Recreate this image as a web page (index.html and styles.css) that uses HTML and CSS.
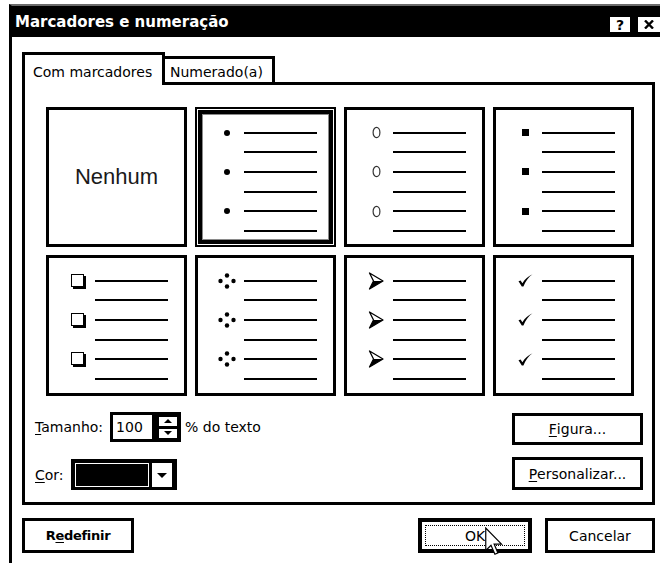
FILE: index.html
```html
<!DOCTYPE html>
<html lang="pt">
  <head>
    <meta charset="UTF-8" />
    <meta name="viewport" content="width=device-width, initial-scale=1.0" />
    <title>Marcadores e numeração</title>
    <link rel="stylesheet" href="styles.css">
  </head>
  <body>
    <div class="dialog">
      <div class="titlebar">
        <span class="title">Marcadores e numeração</span>
        <div class="title-btns">
          <span class="title-btn">?</span>
          <span class="title-btn close">
            <svg width="10" height="9" viewBox="0 0 10 9"><path d="M1 0.5 L9 8.5 M9 0.5 L1 8.5" stroke="#000" stroke-width="2.4" /></svg>
          </span>
        </div>
      </div>

      <div class="content">
        <div class="tabs">
          <div class="tab tab-active">Com marcadores</div>
          <div class="tab tab-other">Numerado(a)</div>
        </div>

        <div class="panel">
          <div class="bullets">
            <div class="cell cell-none">Nenhum</div>

            <div class="cell cell-selected">
              <div class="row"><span class="mark"><span class="dot"></span></span><span class="line"></span></div>
              <div class="row"><span class="mark"></span><span class="line"></span></div>
              <div class="row"><span class="mark"><span class="dot"></span></span><span class="line"></span></div>
              <div class="row"><span class="mark"></span><span class="line"></span></div>
              <div class="row"><span class="mark"><span class="dot"></span></span><span class="line"></span></div>
              <div class="row"><span class="mark"></span><span class="line"></span></div>
            </div>

            <div class="cell">
              <div class="row"><span class="mark"><svg width="9" height="13" viewBox="0 0 9 13"><ellipse cx="4.5" cy="6.5" rx="3.4" ry="5.2" fill="none" stroke="#333" stroke-width="1.2" /></svg></span><span class="line"></span></div>
              <div class="row"><span class="mark"></span><span class="line"></span></div>
              <div class="row"><span class="mark"><svg width="9" height="13" viewBox="0 0 9 13"><ellipse cx="4.5" cy="6.5" rx="3.4" ry="5.2" fill="none" stroke="#333" stroke-width="1.2" /></svg></span><span class="line"></span></div>
              <div class="row"><span class="mark"></span><span class="line"></span></div>
              <div class="row"><span class="mark"><svg width="9" height="13" viewBox="0 0 9 13"><ellipse cx="4.5" cy="6.5" rx="3.4" ry="5.2" fill="none" stroke="#333" stroke-width="1.2" /></svg></span><span class="line"></span></div>
              <div class="row"><span class="mark"></span><span class="line"></span></div>
            </div>

            <div class="cell">
              <div class="row"><span class="mark"><span class="sq"></span></span><span class="line"></span></div>
              <div class="row"><span class="mark"></span><span class="line"></span></div>
              <div class="row"><span class="mark"><span class="sq"></span></span><span class="line"></span></div>
              <div class="row"><span class="mark"></span><span class="line"></span></div>
              <div class="row"><span class="mark"><span class="sq"></span></span><span class="line"></span></div>
              <div class="row"><span class="mark"></span><span class="line"></span></div>
            </div>

            <div class="cell">
              <div class="row"><span class="mark"><span class="box"></span></span><span class="line"></span></div>
              <div class="row"><span class="mark"></span><span class="line"></span></div>
              <div class="row"><span class="mark"><span class="box"></span></span><span class="line"></span></div>
              <div class="row"><span class="mark"></span><span class="line"></span></div>
              <div class="row"><span class="mark"><span class="box"></span></span><span class="line"></span></div>
              <div class="row"><span class="mark"></span><span class="line"></span></div>
            </div>

            <div class="cell">
              <div class="row"><span class="mark"><svg width="18" height="16" viewBox="0 0 18 16"><circle cx="9" cy="2.5" r="2.2" /><circle cx="2.5" cy="8" r="2.2" /><circle cx="15.5" cy="8" r="2.2" /><circle cx="9" cy="13.5" r="2.2" /></svg></span><span class="line"></span></div>
              <div class="row"><span class="mark"></span><span class="line"></span></div>
              <div class="row"><span class="mark"><svg width="18" height="16" viewBox="0 0 18 16"><circle cx="9" cy="2.5" r="2.2" /><circle cx="2.5" cy="8" r="2.2" /><circle cx="15.5" cy="8" r="2.2" /><circle cx="9" cy="13.5" r="2.2" /></svg></span><span class="line"></span></div>
              <div class="row"><span class="mark"></span><span class="line"></span></div>
              <div class="row"><span class="mark"><svg width="18" height="16" viewBox="0 0 18 16"><circle cx="9" cy="2.5" r="2.2" /><circle cx="2.5" cy="8" r="2.2" /><circle cx="15.5" cy="8" r="2.2" /><circle cx="9" cy="13.5" r="2.2" /></svg></span><span class="line"></span></div>
              <div class="row"><span class="mark"></span><span class="line"></span></div>
            </div>

            <div class="cell">
              <div class="row"><span class="mark"><svg width="16" height="18" viewBox="0 0 16 18"><path d="M1.5 1 L15 9 L1.5 17 L5.5 9 Z" fill="none" stroke="#000" stroke-width="1.3" stroke-linejoin="round" /><path d="M5.5 9 L15 9 L1.5 17 Z" /></svg></span><span class="line"></span></div>
              <div class="row"><span class="mark"></span><span class="line"></span></div>
              <div class="row"><span class="mark"><svg width="16" height="18" viewBox="0 0 16 18"><path d="M1.5 1 L15 9 L1.5 17 L5.5 9 Z" fill="none" stroke="#000" stroke-width="1.3" stroke-linejoin="round" /><path d="M5.5 9 L15 9 L1.5 17 Z" /></svg></span><span class="line"></span></div>
              <div class="row"><span class="mark"></span><span class="line"></span></div>
              <div class="row"><span class="mark"><svg width="16" height="18" viewBox="0 0 16 18"><path d="M1.5 1 L15 9 L1.5 17 L5.5 9 Z" fill="none" stroke="#000" stroke-width="1.3" stroke-linejoin="round" /><path d="M5.5 9 L15 9 L1.5 17 Z" /></svg></span><span class="line"></span></div>
              <div class="row"><span class="mark"></span><span class="line"></span></div>
            </div>

            <div class="cell">
              <div class="row"><span class="mark"><svg width="15" height="13" viewBox="0 0 15 13"><path d="M0.5 7.2 L2.6 6.4 L4.4 9.2 C7 5 10 2.3 14.5 0.3 C10.5 3.2 7.6 7 5.4 12.6 L3.8 12.6 Z" /></svg></span><span class="line"></span></div>
              <div class="row"><span class="mark"></span><span class="line"></span></div>
              <div class="row"><span class="mark"><svg width="15" height="13" viewBox="0 0 15 13"><path d="M0.5 7.2 L2.6 6.4 L4.4 9.2 C7 5 10 2.3 14.5 0.3 C10.5 3.2 7.6 7 5.4 12.6 L3.8 12.6 Z" /></svg></span><span class="line"></span></div>
              <div class="row"><span class="mark"></span><span class="line"></span></div>
              <div class="row"><span class="mark"><svg width="15" height="13" viewBox="0 0 15 13"><path d="M0.5 7.2 L2.6 6.4 L4.4 9.2 C7 5 10 2.3 14.5 0.3 C10.5 3.2 7.6 7 5.4 12.6 L3.8 12.6 Z" /></svg></span><span class="line"></span></div>
              <div class="row"><span class="mark"></span><span class="line"></span></div>
            </div>
          </div>

          <div class="options">
            <div class="fields">
              <div class="field">
                <span><u>T</u>amanho:</span>
                <div class="spin">
                  <span class="spin-input">100</span>
                  <span class="spin-btns">
                    <span class="spin-btn"><span class="tri-up"></span></span>
                    <span class="spin-btn"><span class="tri-down"></span></span>
                  </span>
                </div>
                <span class="spin-unit">% do texto</span>
              </div>
              <div class="field field-color">
                <span><u>C</u>or:</span>
                <div class="combo">
                  <span class="combo-swatch"></span>
                  <span class="combo-drop"><span class="tri-down"></span></span>
                </div>
              </div>
            </div>
            <div class="side-btns">
              <button class="btn btn-side"><u>F</u>igura...</button>
              <button class="btn btn-side btn-tall"><u>P</u>ersonalizar...</button>
            </div>
          </div>
        </div>

        <div class="footer">
          <button class="btn btn-foot btn-reset">R<u>e</u>definir</button>
          <button class="btn btn-foot btn-ok"><span class="focus">OK</span></button>
          <button class="btn btn-foot btn-cancel">Cancelar</button>
        </div>
      </div>
    </div>

    <svg class="cursor" width="18" height="29" viewBox="0 0 12 19">
      <path d="M0.5 0.5 L0.5 15.5 L4 12 L6.6 18 L8.6 17.1 L6.1 11.2 L11 11.2 Z" fill="#fff" stroke="#000" stroke-width="0.8" stroke-linejoin="miter" />
    </svg>
  </body>
</html>
```

FILE: styles.css
```css
* {
  box-sizing: border-box;
}

body {
  margin: 0;
  width: 660px;
  height: 563px;
  overflow: hidden;
  position: relative;
  background: #fff;
  color: #000;
  font-family: "DejaVu Sans", sans-serif;
  font-size: 14px;
}

u {
  text-decoration-thickness: 1px;
  text-underline-offset: 2px;
}

.dialog {
  margin: 4px 0 0 9px;
  height: 559px;
  border-top: 2px solid #6b6b6b;
  border-left: 3px solid #000;
}

.titlebar {
  height: 31px;
  display: flex;
  align-items: center;
  padding-left: 3px;
  background: #000;
  color: #fff;
}

.title {
  font-size: 15px;
  font-weight: bold;
}

.title-btns {
  margin-left: auto;
  align-self: flex-end;
  margin-bottom: 5px;
  display: flex;
  gap: 8px;
}

.title-btn {
  width: 20px;
  height: 15px;
  display: flex;
  align-items: center;
  justify-content: center;
  background: #fff;
  color: #000;
  font-size: 14px;
  font-weight: bold;
  line-height: 1;
}

.title-btn.close {
  width: 22px;
}

.content {
  padding: 15px 0 0 10px;
}

/* tabs */
.tabs {
  height: 30px;
  display: flex;
  align-items: flex-end;
}

.tab {
  border: 3px solid #000;
  border-bottom: 0;
  background: #fff;
  line-height: 17px;
}

.tab-active {
  width: 143px;
  height: 33px;
  margin-bottom: -3px;
  padding: 9px 0 0 8px;
  position: relative;
  z-index: 1;
}

.tab-other {
  width: 110px;
  height: 26px;
  border-left: 0;
  padding: 5px 0 0 5px;
}

.panel {
  width: 633px;
  border: 3px solid #000;
  padding: 22px 9px 12px 10px;
}

/* bullet gallery */
.bullets {
  margin-left: 11px;
  display: grid;
  grid-template-columns: repeat(4, 141px);
  grid-template-rows: 140px 141px;
  gap: 8px;
}

.cell {
  border: 3px solid #000;
  padding-top: 13px;
}

.cell-selected {
  border-width: 2px;
  padding: 14px 0 0 1px;
  box-shadow: inset 0 0 0 1px #fff, inset 0 0 0 5px #000, inset 0 0 0 6px #8a8a8a;
}

.cell-none {
  padding: 0;
  display: flex;
  align-items: center;
  justify-content: center;
  font-family: "Liberation Sans", Arial, sans-serif;
  font-size: 22px;
  color: #1a1a1a;
}

.row {
  height: 19.6px;
  display: flex;
  align-items: center;
}

.mark {
  width: 18px;
  margin-left: 20px;
  display: flex;
  align-items: center;
  justify-content: center;
}

.mark svg {
  flex: none;
}

.line {
  width: 73px;
  height: 2px;
  margin-left: 8px;
  background: #000;
}

.dot {
  width: 6px;
  height: 6px;
  border-radius: 50%;
  background: #000;
}

.sq {
  width: 7px;
  height: 7px;
  background: #000;
}

.box {
  width: 13px;
  height: 13px;
  margin: 0 1px 1px 0;
  border: 1px solid #000;
  background: #fff;
  box-shadow: 2px 2px 0 #000;
}

/* size and colour */
.options {
  margin-top: 16px;
  display: flex;
  justify-content: space-between;
}

.fields {
  display: flex;
  flex-direction: column;
  gap: 17px;
}

.field {
  height: 30px;
  display: flex;
  align-items: center;
}

.field-color {
  height: 31px;
}

.spin {
  margin-left: 7px;
  display: flex;
}

.spin-input {
  width: 45px;
  height: 30px;
  padding-left: 3px;
  display: flex;
  align-items: center;
  border: 3px solid #000;
}

.spin-btns {
  width: 26px;
  height: 30px;
  display: flex;
  flex-direction: column;
  align-items: center;
  justify-content: center;
  gap: 3px;
  background: #000;
}

.spin-btn {
  width: 18px;
  height: 9px;
  display: flex;
  align-items: center;
  justify-content: center;
  background: #fff;
}

.tri-up,
.tri-down {
  width: 0;
  height: 0;
  border-left: 4px solid transparent;
  border-right: 4px solid transparent;
}

.tri-up {
  border-bottom: 4px solid #000;
}

.tri-down {
  border-top: 4px solid #000;
}

.spin-unit {
  margin-left: 4px;
}

.combo {
  width: 106px;
  height: 31px;
  margin-left: 7px;
  padding: 4px 5px 3px 4px;
  display: flex;
  gap: 3px;
  background: #000;
}

.combo-swatch {
  width: 74px;
  border: 1px solid #fff;
  background: #000;
}

.combo-drop {
  width: 20px;
  display: flex;
  align-items: center;
  justify-content: center;
  background: #fff;
}

.combo-drop .tri-down {
  border-left-width: 5px;
  border-right-width: 5px;
  border-top-width: 5px;
}

/* buttons */
.btn {
  padding: 0;
  display: flex;
  align-items: center;
  justify-content: center;
  border: 3px solid #000;
  border-radius: 0;
  background: #fff;
  color: #000;
  font: inherit;
}

.side-btns {
  padding-top: 1px;
  display: flex;
  flex-direction: column;
  gap: 12px;
}

.btn-side {
  width: 131px;
  height: 32px;
}

.btn-tall {
  height: 33px;
}

.footer {
  width: 633px;
  margin-top: 13px;
  display: flex;
  gap: 13px;
}

.btn-foot {
  height: 35px;
}

.btn-reset {
  width: 112px;
  font-size: 13px;
  font-weight: bold;
  letter-spacing: -0.3px;
}

.btn-ok {
  width: 114px;
  margin-left: auto;
  border-width: 4px;
}

.focus {
  width: calc(100% - 6px);
  height: calc(100% - 6px);
  display: flex;
  align-items: center;
  justify-content: center;
  border: 1px dotted #000;
}

.btn-cancel {
  width: 110px;
}

.cursor {
  position: absolute;
  left: 485px;
  top: 527px;
}
```
